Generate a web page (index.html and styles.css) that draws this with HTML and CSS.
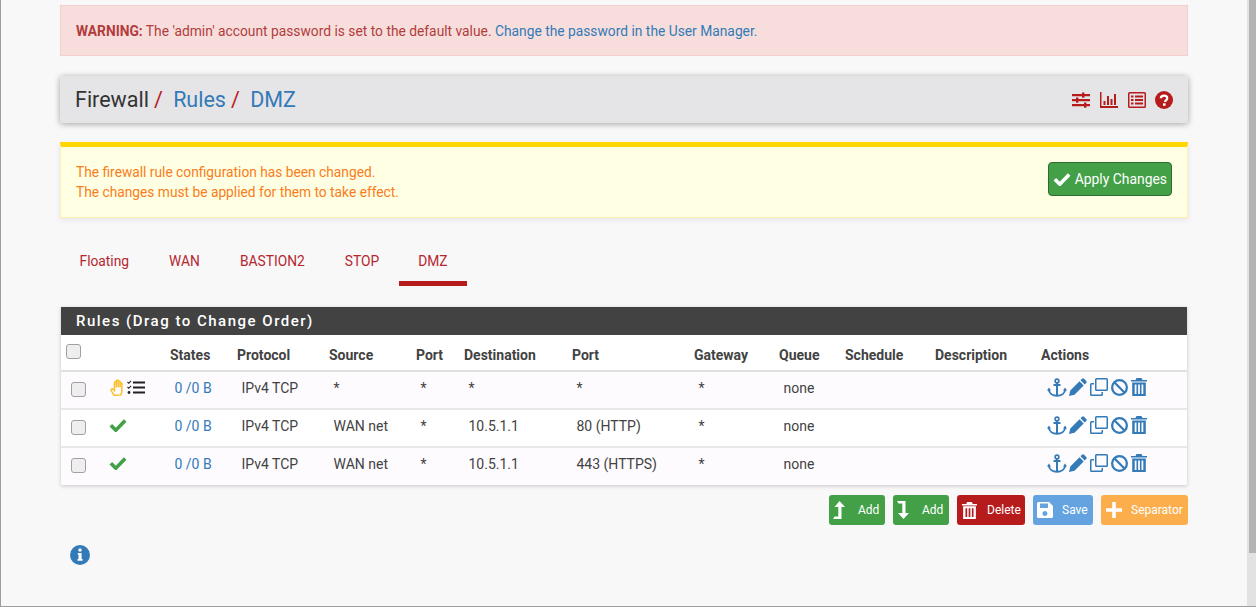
FILE: index.html
```html
<!DOCTYPE html>
<html lang="en">
<head>
    <meta charset="UTF-8">
    <meta name="viewport" content="width=device-width, initial-scale=1.0">
    <title>Firewall: Rules: DMZ</title>
    <link rel="stylesheet" href="styles.css">
</head>
<body>
    <svg class="defs" aria-hidden="true">
        <symbol id="i-sliders" viewBox="0 0 18 18">
            <path d="M0 3h18v2.200H0zM0 8h18v2.200H0zM0 13h18v2.200H0z"/>
            <path d="M10 1.500h2.400v5.200H10zM4 6.500h2.400v5.200H4zM12 11.500h2.400v5.200H12z"/>
        </symbol>
        <symbol id="i-chart" viewBox="0 0 18 16">
            <path d="M0 0h1.500v14H18v2H0z"/>
            <path d="M3.500 9h2v4h-2zM7 4h2v9H7zM10.500 7h2v6h-2zM14 2h2v11h-2z"/>
        </symbol>
        <symbol id="i-list" viewBox="0 0 18 16">
            <path fill-rule="evenodd" d="M1.500 0h15A1.500 1.500 0 0 1 18 1.500v13a1.500 1.500 0 0 1-1.500 1.500h-15A1.500 1.500 0 0 1 0 14.500v-13A1.500 1.500 0 0 1 1.500 0zM1.500 1.500v13h15v-13z"/>
            <path d="M3 3.500h2.500v2H3zM7 3.500h8v2H7zM3 7h2.500v2H3zM7 7h8v2H7zM3 10.500h2.500v2H3zM7 10.500h8v2H7z"/>
        </symbol>
        <symbol id="i-help" viewBox="0 0 18 18">
            <circle cx="9" cy="9" r="9"/>
            <path d="M5.800 7.200C5.900 5.400 7.200 4.600 9 4.600c1.900 0 3.200 1.100 3.200 2.600 0 2.100-2.200 2.200-2.200 3.800" fill="none" stroke="#fff" stroke-width="2.300"/>
            <path d="M8 12.300h2.600v2.500H8z" fill="#fff"/>
        </symbol>
        <symbol id="i-check" viewBox="0 0 18 14">
            <path d="M1.800 7.200l5 5L16.200 2.400" fill="none" stroke="currentColor" stroke-width="3.600"/>
        </symbol>
        <symbol id="i-hand" viewBox="0 0 14.500 16.500">
            <path d="M4 15.800c-.8-1.500-3.200-4.300-3-5.300.2-1 1.300-1.200 2-.5l1.300 1.500V3.600c0-1.300 1.800-1.300 1.800 0v4-5.600c0-1.300 1.900-1.300 1.900 0v5.600-4.700c0-1.300 1.800-1.300 1.800 0v4.700-3c0-1.300 1.700-1.300 1.700 0v6.800c0 1.600-.6 2.800-1 4.100z" fill="none" stroke="currentColor" stroke-width="1.500" stroke-linejoin="round"/>
        </symbol>
        <symbol id="i-tasks" viewBox="0 0 18 15">
            <path d="M6 1.500h12v2H6zM6 6.500h12v2H6zM6 11.500h12v2H6z"/>
            <path d="M.5 2l1.300 1.300L4 .8M.5 7l1.300 1.300L4 5.800" fill="none" stroke="currentColor" stroke-width="1.100"/>
            <circle cx="2" cy="12.500" r="1.400"/>
        </symbol>
        <symbol id="i-anchor" viewBox="0 0 20 19">
            <circle cx="10" cy="3" r="1.900" fill="none" stroke="currentColor" stroke-width="1.600"/>
            <path d="M6.500 7h7M10 5v12.500" fill="none" stroke="currentColor" stroke-width="2"/>
            <path d="M1.800 11.500c.3 3.700 3.700 6.200 8.200 6.200s7.900-2.500 8.200-6.200" fill="none" stroke="currentColor" stroke-width="2"/>
            <path d="M0 12.500l2-3 2 3zM16 12.500l2-3 2 3z"/>
        </symbol>
        <symbol id="i-pencil" viewBox="0 0 18 18">
            <path d="M13 .8a1.500 1.500 0 0 1 2.100 0l2.100 2.100a1.500 1.500 0 0 1 0 2.100l-1.500 1.500-4.200-4.200zM10.500 3.300l4.200 4.200-9.200 9.200L0 18l1.300-5.500z"/>
        </symbol>
        <symbol id="i-clone" viewBox="0 0 18 18">
            <path fill-rule="evenodd" d="M6.500 0h10A1.500 1.500 0 0 1 18 1.500v10a1.500 1.500 0 0 1-1.500 1.500h-10A1.500 1.500 0 0 1 5 11.500v-10A1.500 1.500 0 0 1 6.500 0zM6.500 1.500v10h10v-10z"/>
            <path d="M1.500 5H4v1.500H1.500v10h10V14H13v2.500a1.500 1.500 0 0 1-1.500 1.500h-10A1.500 1.500 0 0 1 0 16.500v-10A1.500 1.500 0 0 1 1.500 5z"/>
        </symbol>
        <symbol id="i-ban" viewBox="0 0 18 18">
            <circle cx="9" cy="9" r="7.800" fill="none" stroke="currentColor" stroke-width="2.400"/>
            <path d="M3.500 3.500l11 11" fill="none" stroke="currentColor" stroke-width="2.400"/>
        </symbol>
        <symbol id="i-trash" viewBox="0 0 16 18">
            <path d="M5.500 0h5l1 2H16v1.600H0V2h4.500z"/>
            <path fill-rule="evenodd" d="M1.200 4.500h13.600V18H1.200zM3.700 6.500v9.500h1.800V6.500zM7.100 6.500v9.500h1.800V6.500zM10.500 6.500v9.500h1.800V6.500z"/>
        </symbol>
        <symbol id="i-up" viewBox="0 0 12 18">
            <path d="M6.500 0L12 6H8.500v12H0l1.500-2.400h3.800V6H1.500z"/>
        </symbol>
        <symbol id="i-down" viewBox="0 0 12 18">
            <path d="M0 0h8.500v12H12l-5.500 6L1 12h4.300V2.400H1.500z"/>
        </symbol>
        <symbol id="i-save" viewBox="0 0 16 16">
            <path fill-rule="evenodd" d="M1.500 0H12l4 4v10.500a1.500 1.500 0 0 1-1.500 1.500h-13A1.500 1.500 0 0 1 0 14.500v-13A1.500 1.500 0 0 1 1.500 0zM3 1.500V6h8V1.500zM8 9a2.500 2.500 0 1 0 0 5 2.500 2.500 0 0 0 0-5z"/>
        </symbol>
        <symbol id="i-plus" viewBox="0 0 16 16">
            <path d="M6.200 0h3.600v6.200H16v3.600H9.800V16H6.200V9.800H0V6.200h6.200z"/>
        </symbol>
        <symbol id="i-info" viewBox="0 0 20 20">
            <circle cx="10" cy="10" r="10"/>
            <circle cx="10" cy="5" r="1.700" fill="#fff"/>
            <path d="M7.800 8h3.800v6h1v1.700H7.500V14h1v-4.300h-.7z" fill="#fff"/>
        </symbol>
    </svg>

    <div class="page">
        <div class="content">
            <div class="alert">
                <strong>WARNING:</strong> The 'admin' account password is set to the default value. <a href="#">Change the password in the User Manager.</a>
            </div>

            <div class="titlebar">
                <h1>
                    <span>Firewall</span><i>/</i>
                    <a href="#">Rules</a><i>/</i>
                    <a href="#">DMZ</a>
                </h1>
                <div class="title-icons">
                    <svg class="ic-sliders"><use href="#i-sliders"/></svg>
                    <svg class="ic-chart"><use href="#i-chart"/></svg>
                    <svg class="ic-list"><use href="#i-list"/></svg>
                    <svg class="ic-help"><use href="#i-help"/></svg>
                </div>
            </div>

            <div class="notice">
                <div class="notice-text">
                    The firewall rule configuration has been changed.<br>
                    The changes must be applied for them to take effect.
                </div>
                <button type="button" class="apply"><svg><use href="#i-check"/></svg>Apply Changes</button>
            </div>

            <ul class="tabs">
                <li><a href="#">Floating</a></li>
                <li><a href="#">WAN</a></li>
                <li><a href="#">BASTION2</a></li>
                <li><a href="#">STOP</a></li>
                <li class="active"><a href="#">DMZ</a></li>
            </ul>

            <div class="panel">
                <h2>Rules (Drag to Change Order)</h2>
                <table>
                    <colgroup>
                        <col class="c-check"><col class="c-status"><col class="c-states"><col class="c-proto">
                        <col class="c-src"><col class="c-sport"><col class="c-dest"><col class="c-dport">
                        <col class="c-gw"><col class="c-queue"><col class="c-sched"><col class="c-desc"><col class="c-act">
                    </colgroup>
                    <thead>
                        <tr>
                            <th><input type="checkbox" class="box box-head"></th>
                            <th></th>
                            <th>States</th>
                            <th>Protocol</th>
                            <th>Source</th>
                            <th>Port</th>
                            <th>Destination</th>
                            <th>Port</th>
                            <th>Gateway</th>
                            <th>Queue</th>
                            <th>Schedule</th>
                            <th>Description</th>
                            <th>Actions</th>
                        </tr>
                    </thead>
                    <tbody>
                        <tr>
                            <td><input type="checkbox" class="box"></td>
                            <td class="status"><svg class="ic-hand"><use href="#i-hand"/></svg><svg class="ic-tasks"><use href="#i-tasks"/></svg></td>
                            <td><a href="#">0 /0 B</a></td>
                            <td>IPv4 TCP</td>
                            <td>*</td>
                            <td>*</td>
                            <td>*</td>
                            <td>*</td>
                            <td>*</td>
                            <td>none</td>
                            <td></td>
                            <td></td>
                            <td class="actions"><svg class="ic-anchor"><use href="#i-anchor"/></svg><svg class="ic-pencil"><use href="#i-pencil"/></svg><svg class="ic-clone"><use href="#i-clone"/></svg><svg class="ic-ban"><use href="#i-ban"/></svg><svg class="ic-trash"><use href="#i-trash"/></svg></td>
                        </tr>
                        <tr>
                            <td><input type="checkbox" class="box"></td>
                            <td class="status"><svg class="ic-check"><use href="#i-check"/></svg></td>
                            <td><a href="#">0 /0 B</a></td>
                            <td>IPv4 TCP</td>
                            <td>WAN net</td>
                            <td>*</td>
                            <td>10.5.1.1</td>
                            <td>80 (HTTP)</td>
                            <td>*</td>
                            <td>none</td>
                            <td></td>
                            <td></td>
                            <td class="actions"><svg class="ic-anchor"><use href="#i-anchor"/></svg><svg class="ic-pencil"><use href="#i-pencil"/></svg><svg class="ic-clone"><use href="#i-clone"/></svg><svg class="ic-ban"><use href="#i-ban"/></svg><svg class="ic-trash"><use href="#i-trash"/></svg></td>
                        </tr>
                        <tr>
                            <td><input type="checkbox" class="box"></td>
                            <td class="status"><svg class="ic-check"><use href="#i-check"/></svg></td>
                            <td><a href="#">0 /0 B</a></td>
                            <td>IPv4 TCP</td>
                            <td>WAN net</td>
                            <td>*</td>
                            <td>10.5.1.1</td>
                            <td>443 (HTTPS)</td>
                            <td>*</td>
                            <td>none</td>
                            <td></td>
                            <td></td>
                            <td class="actions"><svg class="ic-anchor"><use href="#i-anchor"/></svg><svg class="ic-pencil"><use href="#i-pencil"/></svg><svg class="ic-clone"><use href="#i-clone"/></svg><svg class="ic-ban"><use href="#i-ban"/></svg><svg class="ic-trash"><use href="#i-trash"/></svg></td>
                        </tr>
                    </tbody>
                </table>
            </div>

            <div class="buttons">
                <button type="button" class="btn green"><svg class="b-arrow"><use href="#i-up"/></svg>Add</button>
                <button type="button" class="btn green"><svg class="b-arrow"><use href="#i-down"/></svg>Add</button>
                <button type="button" class="btn red"><svg class="b-trash"><use href="#i-trash"/></svg>Delete</button>
                <button type="button" class="btn blue"><svg class="b-save"><use href="#i-save"/></svg>Save</button>
                <button type="button" class="btn orange"><svg class="b-plus"><use href="#i-plus"/></svg>Separator</button>
            </div>

            <svg class="ic-info"><use href="#i-info"/></svg>
        </div>
        <div class="scrollbar"><div class="thumb"></div></div>
    </div>
</body>
</html>
```

FILE: styles.css
```css
html, body {
    margin: 0;
    padding: 0;
    height: 100%;
    overflow: hidden;
}

body {
    font-family: Roboto, "Liberation Sans", sans-serif;
    font-size: 13.800px;
    line-height: 20px;
    color: #424242;
    background-color: #f8f8f8;
}

a {
    color: #337ab7;
    text-decoration: none;
}

.defs {
    display: none;
}

.page {
    display: flex;
    height: 606px;
    border-left: 1px solid #9e9e9e;
    border-bottom: 1px solid #9e9e9e;
}

.content {
    flex: 1;
    padding: 5px 59px 0 59px;
    min-width: 0;
}

.scrollbar {
    width: 9px;
    background-color: #e2e2e2;
}

.thumb {
    height: 553px;
    margin-left: 2px;
    background-color: #b4b4b4;
}

.alert {
    height: 49px;
    padding: 0 15px;
    line-height: 50px;
    color: #b23c3c;
    background-color: #f7dedd;
    border: 1px solid #f3cfd0;
}

.titlebar {
    display: flex;
    justify-content: space-between;
    align-items: center;
    height: 47px;
    margin-top: 20px;
    padding: 0 15px;
    background-color: #e5e4e7;
    border-radius: 3px;
    box-shadow: 0 1px 6px rgba(0, 0, 0, 0.35);
}

h1 {
    margin: 0;
    padding-top: 1px;
    font-size: 21.500px;
    font-weight: 400;
    color: #333;
}

h1 i {
    font-style: normal;
    color: #b71c1c;
    margin: 0 5px 0 5px;
}

.title-icons {
    display: flex;
    align-items: center;
    gap: 9.500px;
    margin-left: -1px;
    fill: #b71c1c;
}

.ic-sliders { width: 18px; height: 18px; margin-right: 0.500px; margin-left: -0.500px; }
.ic-chart { width: 18px; height: 16px; }
.ic-list { width: 18px; height: 16px; }
.ic-help { width: 18px; height: 18px; }

.notice {
    display: flex;
    justify-content: space-between;
    align-items: flex-start;
    height: 55px;
    margin-top: 19px;
    padding: 15px 15px 0 15px;
    color: #f97c20;
    background-color: #ffffe3;
    border: 1px solid #ffeeb0;
    border-top: 5px solid #ffd600;
    box-shadow: 0 2px 6px rgba(0, 0, 0, 0.08);
}

.notice-text {
    font-size: 13.750px;
}

.apply {
    display: flex;
    align-items: center;
    height: 34px;
    padding: 0 4px;
    font-family: inherit;
    font-size: 13.900px;
    color: #fff;
    background-color: #43a047;
    border: 1px solid #2e6b31;
    border-radius: 4px;
}

.apply svg {
    width: 18px;
    height: 14px;
    margin-right: 4px;
    color: #fff;
}

.tabs {
    display: flex;
    list-style: none;
    margin: 29px 0 0 -0.500px;
    padding: 0;
}

.tabs a {
    display: block;
    height: 34px;
    padding: 0 20px;
    line-height: 29px;
    color: #b5262e;
    border-bottom: 5px solid transparent;
}

.tabs .active a {
    padding: 0 19px 0 19px;
    border-bottom-color: #b71c1c;
}

.panel {
    margin: 21px 1px 0 1px;
    background-color: #fff;
    box-shadow: 0 1px 4px rgba(0, 0, 0, 0.2);
}

h2 {
    margin: 0;
    height: 28px;
    padding-left: 15px;
    font-size: 15px;
    font-weight: 500;
    line-height: 29px;
    letter-spacing: 1.500px;
    color: #fff;
    background-color: #424242;
}

table {
    width: 100%;
    table-layout: fixed;
    border-collapse: collapse;
}

.c-check { width: 39px; }
.c-status { width: 65px; }
.c-states { width: 67px; }
.c-proto { width: 92px; }
.c-src { width: 87px; }
.c-sport { width: 48px; }
.c-dest { width: 108px; }
.c-dport { width: 122px; }
.c-gw { width: 85px; }
.c-queue { width: 66px; }
.c-sched { width: 90px; }
.c-desc { width: 106px; }

th {
    height: 36px;
    padding: 5px 5px 0 5px;
    box-sizing: border-box;
    text-align: left;
    font-size: 14px;
    font-weight: 700;
    color: #424242;
    border-bottom: 2px solid #e0e0e0;
}

th:first-child {
    padding-top: 0;
}

td {
    height: 38px;
    padding: 6px 0 0 9.500px;
    box-sizing: border-box;
    vertical-align: top;
    font-size: 14px;
    color: #424242;
    border-bottom: 2px solid #e8e8e8;
}

tbody tr:nth-child(odd) {
    background-color: #fdfbfe;
}

tbody tr:last-child td {
    border-bottom: none;
}

.box {
    display: block;
    appearance: none;
    width: 15px;
    height: 15px;
    margin: 4px 0 0 0.500px;
    background-color: #eeeeee;
    border: 1px solid #a0a0a0;
    border-radius: 3px;
}

.box-head {
    margin: 0 0 3px 0;
}

.status {
    color: #43a047;
}

.status svg {
    display: block;
    float: left;
}

.ic-check {
    width: 18px;
    height: 14px;
    margin-top: 2px;
    margin-left: -1px;
}

.ic-hand {
    width: 17px;
    height: 17px;
    margin-top: 1px;
    margin-right: 1px;
    margin-left: -1px;
    color: #fbc02d;
}

.ic-tasks {
    width: 18px;
    height: 15px;
    margin-top: 2px;
    color: #212121;
    fill: #212121;
}

.actions {
    padding-left: 10.500px;
    color: #337ab7;
    fill: #337ab7;
    white-space: nowrap;
}

.actions svg {
    vertical-align: top;
    margin-right: 3px;
}

.ic-anchor { width: 20px; height: 19px; margin-right: 2px !important; }
.ic-pencil { width: 18px; height: 18px; }
.ic-clone { width: 18px; height: 18px; }
.ic-ban { width: 17px; height: 17px; margin-top: 1px; }
.ic-trash { width: 16px; height: 18px; }

.buttons {
    display: flex;
    justify-content: flex-end;
    gap: 8px;
    margin-top: 10px;
}

.btn {
    display: flex;
    align-items: center;
    height: 30px;
    padding: 0 0 0 3px;
    font-family: inherit;
    font-size: 12px;
    color: #fff;
    border-radius: 3px;
    border: 1px solid transparent;
    fill: #fff;
}

.green { background-color: #43a047; width: 56px; }
.red { background-color: #b71c1c; width: 68px; }
.blue { background-color: #64a3e0; width: 60px; }
.orange { background-color: #fbae4b; width: 87px; }

.b-arrow { width: 12px; height: 18px; margin-right: 13px; }
.b-trash { width: 15px; height: 17px; margin: 0 10px 0 1px; }
.b-save { width: 16px; height: 16px; margin-right: 9px; }
.b-plus { width: 16px; height: 16px; margin: 0 9px 0 1px; }

.ic-info {
    display: block;
    width: 20px;
    height: 20px;
    margin: 20px 0 0 10px;
    fill: #337ab7;
}
```
